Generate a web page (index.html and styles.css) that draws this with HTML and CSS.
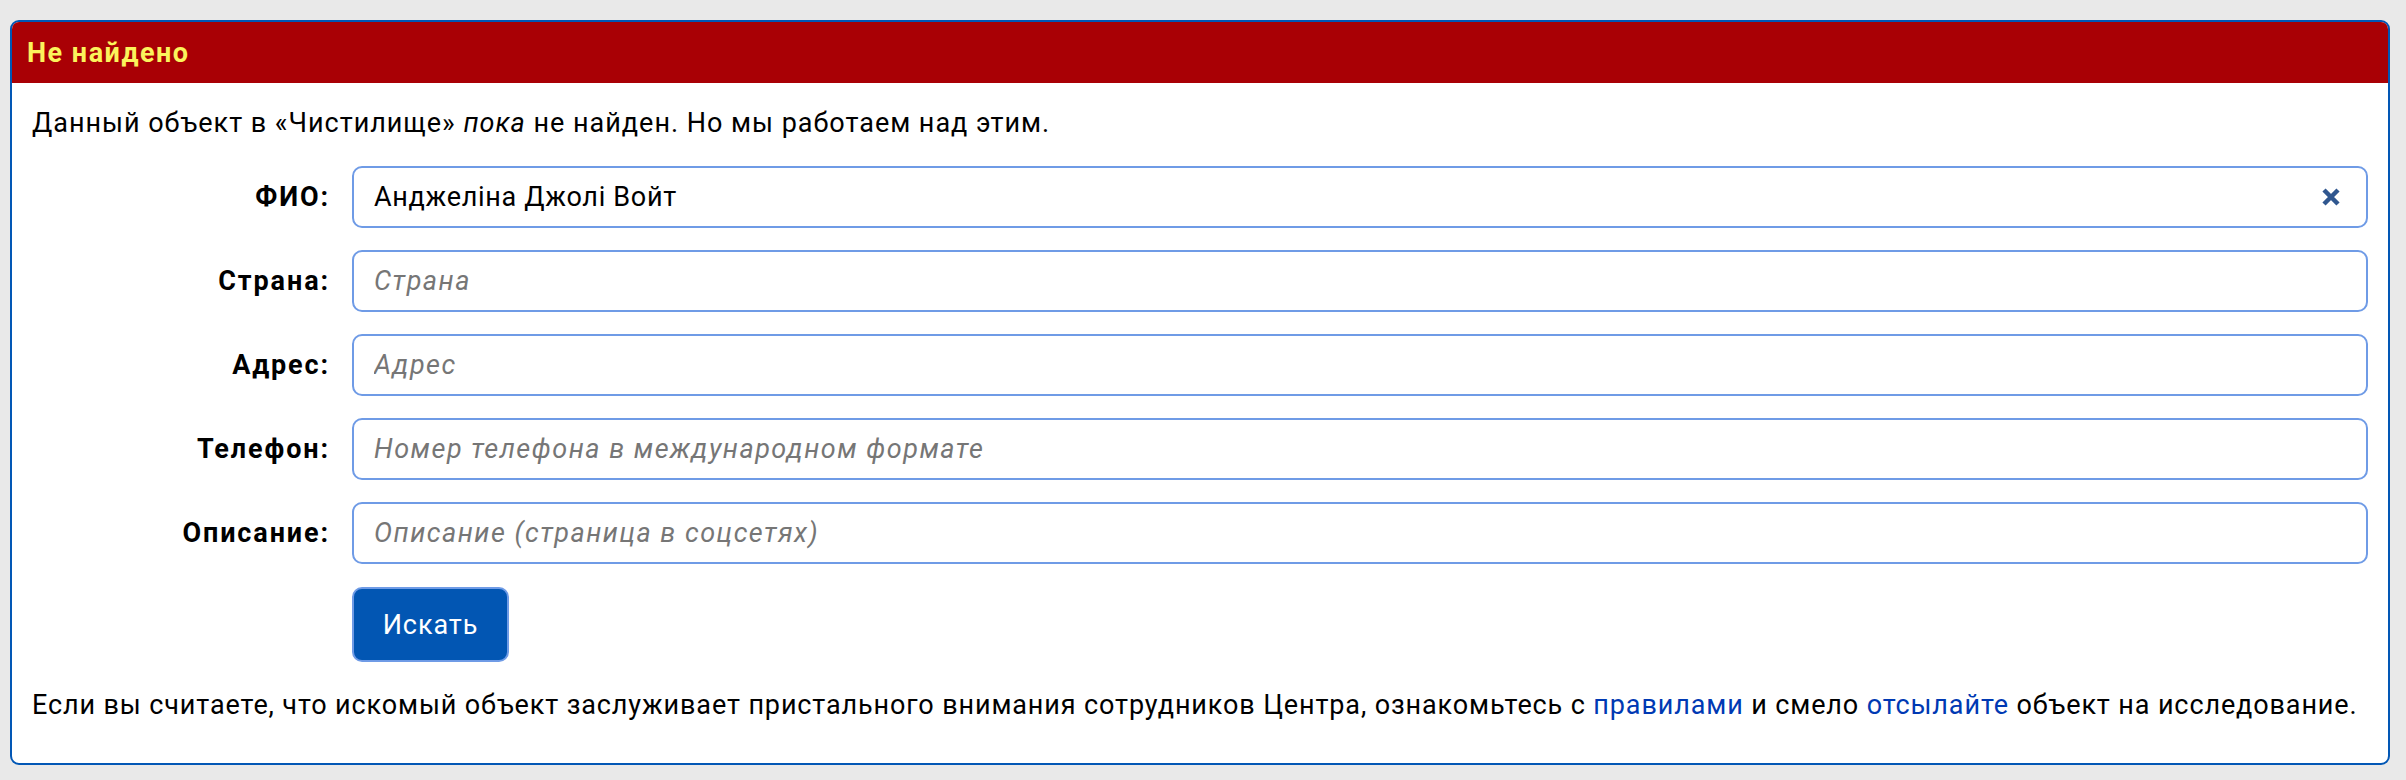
FILE: index.html
```html
<!DOCTYPE html>
<html lang="ru">
<head>
<meta charset="utf-8">
<title>Не найдено</title>
<link rel="stylesheet" href="styles.css">
</head>
<body>
<div class="card">
  <div class="card-header">Не найдено</div>
  <div class="card-body">
    <p class="intro">Данный объект в «Чистилище» <em>пока</em> не найден. Но мы работаем над этим.</p>
    <form class="search-form">
      <label class="label" for="fio">ФИО:</label>
      <div class="field">
        <input class="input" id="fio" type="text" value="Анджеліна Джолі Войт">
        <span class="clear"><svg width="20" height="20" viewBox="0 0 20 20"><path d="M3 3 L17 17 M17 3 L3 17" stroke="#30578f" stroke-width="4.5" stroke-linecap="butt"/></svg></span>
      </div>
      <label class="label" for="country">Страна:</label>
      <div class="field"><input class="input" id="country" type="text" placeholder="Страна"></div>
      <label class="label" for="address">Адрес:</label>
      <div class="field"><input class="input" id="address" type="text" placeholder="Адрес"></div>
      <label class="label" for="phone">Телефон:</label>
      <div class="field"><input class="input" id="phone" type="text" placeholder="Номер телефона в международном формате"></div>
      <label class="label" for="desc">Описание:</label>
      <div class="field"><input class="input" id="desc" type="text" placeholder="Описание (страница в соцсетях)"></div>
      <span></span>
      <div class="actions"><button class="btn" type="button">Искать</button></div>
    </form>
    <p class="note">Если вы считаете, что искомый объект заслуживает пристального внимания сотрудников Центра, ознакомьтесь с <a href="#">правилами</a> и смело <a href="#">отсылайте</a> объект на исследование.</p>
  </div>
</div>
</body>
</html>
```
FILE: styles.css
```css
html, body {
  margin: 0;
  background: #e9e9e9;
}
body {
  padding: 20px 16px 13px 10px;
  font-family: Roboto, "Liberation Sans", sans-serif;
  font-size: 27px;
  letter-spacing: 0.88px;
  color: #000;
}
.card {
  background: #fff;
  border: 2px solid #0257b5;
  border-radius: 9px;
  overflow: hidden;
}
.card-header {
  background: #a90005;
  color: #fbf35c;
  font-weight: 700;
  letter-spacing: 1.5px;
  height: 61px;
  display: flex;
  align-items: center;
  padding: 0 15px;
}
.card-body {
  padding: 0 20px 38px 20px;
}
.intro {
  margin: 21px 0 23px 0;
  line-height: 39px;
  letter-spacing: 0.98px;
}
.search-form {
  display: grid;
  grid-template-columns: 298px 1fr;
  column-gap: 22px;
  row-gap: 22px;
  align-items: center;
}
.label {
  font-weight: 700;
  letter-spacing: 1.9px;
  text-align: right;
}
.field {
  position: relative;
}
.input {
  box-sizing: border-box;
  width: 100%;
  height: 62px;
  border: 2px solid #6f9be6;
  border-radius: 10px;
  padding: 0 20px;
  font: inherit;
  letter-spacing: 0.7px;
  color: #000;
  background: #fff;
  outline: none;
}
.input::placeholder {
  font-style: italic;
  letter-spacing: 1.5px;
  color: #767676;
}
.clear {
  position: absolute;
  right: 27px;
  top: 21px;
  width: 20px;
  height: 20px;
  display: block;
}
.clear svg { display: block; }
.actions {
  padding-top: 1px;
}
.btn {
  box-sizing: border-box;
  width: 157px;
  height: 75px;
  background: #0256b3;
  color: #fff;
  border: 2px solid #6f9be6;
  border-radius: 10px;
  font: inherit;
  letter-spacing: 0.93px;
  padding: 0;
}
.note {
  margin: 24px 0 0 0;
  line-height: 39px;
}
.note a {
  color: #0039b3;
  text-decoration: none;
}
```
